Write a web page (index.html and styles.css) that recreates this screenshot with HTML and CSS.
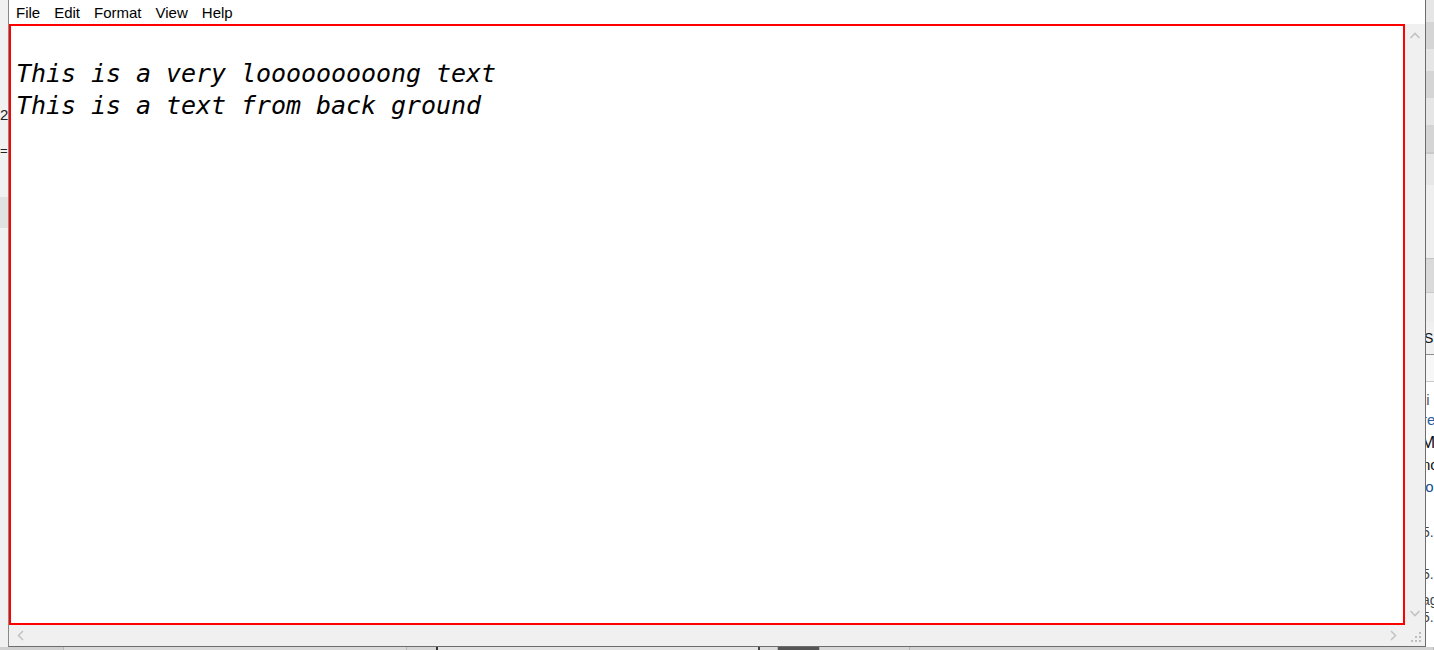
FILE: index.html
```html
<!DOCTYPE html>
<html lang="en">
<head>
<meta charset="utf-8">
<title>Notepad</title>
<link rel="stylesheet" href="styles.css">
</head>
<body>
<div class="screen">
  <div class="top">
    <div class="bg-left">
      <div class="bl bl-1"></div>
      <div class="bl bl-txt">2</div>
      <div class="bl bl-2"></div>
      <div class="bl bl-txt2">=</div>
      <div class="bl bl-3"></div>
      <div class="bl bl-band"></div>
      <div class="bl bl-rest"></div>
    </div>
    <div class="window">
      <div class="menubar">
        <span class="menu-item">File</span>
        <span class="menu-item">Edit</span>
        <span class="menu-item">Format</span>
        <span class="menu-item">View</span>
        <span class="menu-item">Help</span>
      </div>
      <div class="client">
        <div class="editor">
          <div class="line"></div>
          <div class="line">This is a very looooooooong text</div>
          <div class="line">This is a text from back ground</div>
        </div>
        <div class="vscroll">
          <svg class="arrow" width="20" height="22" viewBox="0 0 20 22"><path d="M5.5 14 L10 9.5 L14.5 14" fill="none" stroke="#c3c3c3" stroke-width="1.6"/></svg>
          <svg class="arrow" width="20" height="22" viewBox="0 0 20 22"><path d="M5.5 8 L10 12.5 L14.5 8" fill="none" stroke="#c3c3c3" stroke-width="1.6"/></svg>
        </div>
        <div class="hscroll">
          <svg class="arrow" width="22" height="21" viewBox="0 0 22 21"><path d="M13 6 L8.5 10.5 L13 15" fill="none" stroke="#c3c3c3" stroke-width="1.6"/></svg>
          <svg class="arrow" width="22" height="21" viewBox="0 0 22 21"><path d="M9 6 L13.5 10.5 L9 15" fill="none" stroke="#c3c3c3" stroke-width="1.6"/></svg>
        </div>
        <div class="grip">
          <svg width="20" height="21" viewBox="0 0 20 21">
            <rect x="14" y="7" width="2" height="2" fill="#bdbdbd"/>
            <rect x="10" y="11" width="2" height="2" fill="#bdbdbd"/>
            <rect x="14" y="11" width="2" height="2" fill="#bdbdbd"/>
            <rect x="6" y="15" width="2" height="2" fill="#bdbdbd"/>
            <rect x="10" y="15" width="2" height="2" fill="#bdbdbd"/>
            <rect x="14" y="15" width="2" height="2" fill="#bdbdbd"/>
          </svg>
        </div>
      </div>
    </div>
    <div class="bg-right">
      <div class="br br-a"></div>
      <div class="br br-b"></div>
      <div class="br br-a"></div>
      <div class="br br-b"></div>
      <div class="br br-c"></div>
      <div class="br br-b br-b2"></div>
      <div class="br br-d"></div>
      <div class="br br-e"></div>
      <div class="br br-f"></div>
      <div class="br br-g"></div>
      <div class="br br-h"><span class="frag dark">S</span></div>
      <div class="br br-i"></div>
      <div class="br br-j">
        <span class="frag t1">ti</span>
        <span class="frag t2">re</span>
        <span class="frag t3">M</span>
        <span class="frag t4">nc</span>
        <span class="frag t5">lo</span>
        <span class="frag t6">5.</span>
        <span class="frag t7">5.</span>
        <span class="frag t8">ag</span>
        <span class="frag t9">5.</span>
      </div>
    </div>
  </div>
  <div class="bg-bottom">
    <div class="seg s1"></div>
    <div class="seg s2"></div>
    <div class="seg s3"></div>
    <div class="seg s4"></div>
    <div class="seg s5"></div>
    <div class="seg s6"></div>
    <div class="seg s7"></div>
    <div class="seg s8"></div>
  </div>
</div>
</body>
</html>
```

FILE: styles.css
```css
* { box-sizing: border-box; }

html, body {
  margin: 0;
  padding: 0;
  background: #f0f0f0;
  overflow: hidden;
}

.screen {
  width: 1434px;
  height: 650px;
  display: flex;
  flex-direction: column;
  font-family: "Liberation Sans", Arial, sans-serif;
}

.top {
  display: flex;
  height: 647px;
}

/* left background strip */
.bg-left {
  width: 8px;
  display: flex;
  flex-direction: column;
  background: #f1f1f1;
  overflow: hidden;
}
.bl-1 { height: 106px; }
.bl-txt {
  height: 18px;
  font-size: 15px;
  line-height: 18px;
  color: #222;
  text-indent: 0px;
}
.bl-2 { height: 18px; }
.bl-txt2 {
  height: 18px;
  font-size: 13px;
  line-height: 18px;
  color: #222;
}
.bl-3 { height: 37px; }
.bl-band { height: 31px; background: #e1e1e1; }
.bl-rest { flex: 1; }

/* notepad window */
.window {
  width: 1418px;
  display: flex;
  flex-direction: column;
  border-left: 1px solid #8a8a8a;
  border-right: 1px solid #6d6d6d;
  border-bottom: 1px solid #6d6d6d;
  background: #ffffff;
  box-shadow: 1px 1px 0 #c8c8c8;
}

.menubar {
  height: 24px;
  display: flex;
  padding-left: 0;
  background: #ffffff;
}
.menu-item {
  padding: 1px 7px 0 7px;
  font-size: 15px;
  line-height: 23px;
  color: #000;
}

.client {
  display: grid;
  grid-template-columns: 1396px 20px;
  grid-template-rows: 601px 21px;
}

.editor {
  border: 2px solid #ff0000;
  background: #fff;
  padding-left: 5px;
  font-family: "DejaVu Sans Mono", "Liberation Mono", monospace;
  font-style: italic;
  font-size: 25px;
  letter-spacing: -0.05px;
  color: #000;
  overflow: hidden;
}
.line {
  height: 32px;
  line-height: 32px;
  white-space: pre;
}

.vscroll {
  background: #f0f0f0;
  display: flex;
  flex-direction: column;
  justify-content: space-between;
}
.hscroll {
  background: #f0f0f0;
  display: flex;
  justify-content: space-between;
  padding-left: 1px;
  padding-right: 1px;
}
.arrow { display: block; }
.grip { background: #f0f0f0; }
.grip svg { display: block; }

/* right background strip */
.bg-right {
  width: 8px;
  display: flex;
  flex-direction: column;
  overflow: hidden;
  background: #f0f0f0;
}
.br { flex: none; overflow: hidden; }
.br-a { height: 22px; background: #e6e6e6; }
.br-a:first-child { height: 22px; }
.br-b { height: 27px; background: #d5d5d5; }
.br-c { height: 27px; background: #e6e6e6; }
.br-b2 { border-bottom: 2px solid #cacaca; height: 29px; }
.br-d { height: 31px; background: #e7e7e7; }
.br-e { height: 74px; background: #efefef; border-bottom: 1px solid #c3c3c3; }
.br-f { height: 34px; background: #dadada; border-bottom: 1px solid #c9c9c9; }
.br-g { height: 29px; background: #ededed; }
.br-h {
  height: 33px;
  background: #f0f0f0;
  border-bottom: 1px solid #8e8e8e;
  padding-top: 7px;
}
.br-i { height: 27px; background: #f7f7f7; border-bottom: 1px solid #c9c9c9; }
.br-j {
  flex: 1;
  background: #ffffff;
  display: flex;
  flex-direction: column;
  padding-top: 8px;
}
.frag {
  display: block;
  font-size: 15px;
  line-height: 20px;
  white-space: nowrap;
  color: #333;
  text-indent: -4px;
}
.frag.dark { color: #111; text-indent: -2px; font-size: 14px; line-height: 18px; }
.t1 { color: #556; }
.t2 { color: #2a5d9a; }
.t3 { color: #111; font-size: 17px; line-height: 22px; margin-top: 2px; text-indent: -5px; }
.t4 { color: #111; line-height: 22px; }
.t5 { color: #174f95; line-height: 22px; }
.t6 { margin-top: 24px; font-size: 14px; color: #444; }
.t7 { margin-top: 22px; font-size: 14px; color: #444; }
.t8 { margin-top: 6px; font-size: 14px; color: #444; }
.t9 { font-size: 14px; color: #444; line-height: 14px; }

/* bottom background strip */
.bg-bottom {
  height: 3px;
  display: flex;
  background: #d8d8d8;
}
.seg { height: 3px; border-right: 1px solid #b8b8b8; }
.s1 { width: 64px; background: #d0d0d0; }
.s2 { width: 343px; background: #dadada; }
.s3 { width: 31px; background: #d6d6d6; border-right: 2px solid #333; }
.s4 { width: 322px; background: #e4e4e4; border-right: 2px solid #444; }
.s5 { width: 18px; background: #dcdcdc; }
.s6 { width: 42px; background: #555; }
.s7 { width: 90px; background: #d8d8d8; }
.s8 { flex: 1; background: #d3d3d3; }
```
